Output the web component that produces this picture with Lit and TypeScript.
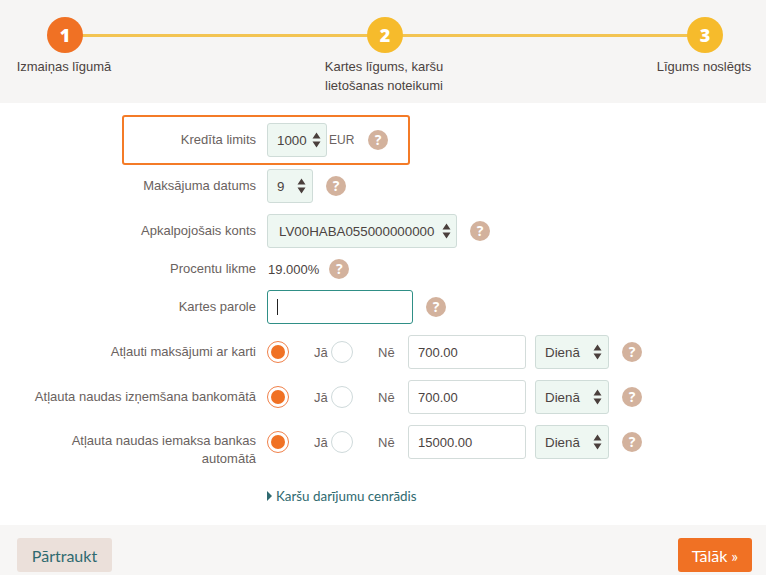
import { LitElement, html, css } from "lit";
import { customElement } from "lit/decorators.js";

const arrows = html`<svg class="arr" width="9" height="16" viewBox="0 0 9 16"><path d="M4.5 0.5 8.5 6.5H.5Z M4.5 15.5 .5 9.5H8.5Z" fill="#4a3f3c"/></svg>`;

@customElement("app-root")
export class AppRoot extends LitElement {
  static styles = css`
    :host { display: block; width: 766px; height: 575px; background: #fff; overflow: hidden;
      font-family: "Liberation Sans", Arial, sans-serif; font-size: 13px; color: #5c5452; }
    * { box-sizing: border-box; }
    .head { position: relative; height: 103px; background: #f6f5f4; padding: 17px 0 0 4px; display: flex; justify-content: space-between; }
    .line { position: absolute; left: 65px; width: 640px; top: 34px; height: 3px; background: #f3c452; }
    .step { position: relative; width: 122px; display: flex; flex-direction: column; align-items: center; text-align: center; font-size: 13px; line-height: 19px; color: #4b4341; }
    .txt { margin-right: 2px; }
    .dot { width: 36px; height: 36px; border-radius: 50%; background: #f6bb2c; color: #fff; font: 800 18px/36px "Open Sans", sans-serif; margin-bottom: 4px; }
    .dot.on { background: #f07124; }
    .main { padding-top: 12px; height: 422px; }
    .row { display: flex; align-items: center; height: 34px; margin-top: 11px; }
    .lab { width: 256px; margin-right: 11px; flex: none; text-align: right; line-height: 18px; color: #6a6260; }
    .hl { margin: 0 0 0 122px; width: 288px; height: 50px; border: 2px solid #f47b27; border-radius: 3px; }
    .hl .lab { width: 132px; }
    .r2 { margin-top: 4px; }
    .tall { height: 22px; margin-top: 10px; }
    .r5 { margin-top: 10px; }
    .sel { height: 34px; display: flex; align-items: center; justify-content: space-between; background: #eef7f2; border: 1px solid #cfdcd8; border-radius: 3px; color: #4b4341; flex: none; font-size: 13.33px; }
    .s1 { width: 60px; padding: 0 5px 0 9px; }
    .s2 { width: 46px; padding: 0 6px 0 9px; }
    .s3 { width: 190px; padding: 0 5px 0 11px; }
    .s4 { width: 74px; margin-left: 9px; padding: 0 6px 0 9px; }
    .arr { flex: none; }
    .unit { font-size: 12px; margin-left: 2px; width: 26px; color: #6a6260; }
    .q { width: 20px; height: 20px; flex: none; border-radius: 50%; background: #d3b29d; color: #fff; font: 700 14px/20px "Open Sans", sans-serif; text-align: center; }
    .q1, .q2, .q3, .q4 { margin-left: 13px; }
    .val { color: #4b4341; margin: 0 10px 0 1px; }
    .input { height: 34px; background: #fff; border: 1px solid #d3dcda; border-radius: 3px; padding-left: 9px; display: flex; align-items: center; color: #4b4341; flex: none; }
    .pw { width: 146px; border-color: #2f8f86; margin-right: 13px; }
    .caret { width: 1px; height: 16px; background: #222; }
    .amt { width: 118px; }
    .radio { width: 22px; height: 22px; border-radius: 50%; border: 1px solid #cfdadb; background: #fff; flex: none; }
    .radio.on { border-color: #f0814a; display: flex; align-items: center; justify-content: center; }
    .radio.on::after { content: ""; width: 14px; height: 14px; border-radius: 50%; background: #f07124; }
    .ja { margin-left: 25px; width: 17px; flex: none; color: #6a6260; }
    .ne { margin-left: 25px; width: 30px; flex: none; color: #6a6260; }
    .top { align-items: flex-start; }
    .top .lab { padding: 7px 0 0 60px; }
    .top .q { align-self: center; }
    .top .ctr { align-self: center; }
    .link { margin: 28px 0 0 267px; display: flex; align-items: center; gap: 4px; font: 13.4px/18px Lato, sans-serif; color: #2f6a70; }
    .tri { width: 0; height: 0; border-left: 5px solid #2f6a70; border-top: 5px solid transparent; border-bottom: 5px solid transparent; }
    .foot { height: 50px; background: #f7f6f5; padding: 13px 14px 3px 17px; display: flex; justify-content: space-between; }
    .btn { height: 34px; border-radius: 3px; display: flex; align-items: center; justify-content: center; font: 16px Lato, sans-serif; }
    .back { width: 95px; background: #ebe0da; color: #2f6a70; }
    .next { width: 74px; background: #f07124; color: #fff; }
  `;

  private radios() {
    return html`<span class="radio on ctr"></span><span class="ja ctr">Jā</span><span class="radio ctr"></span><span class="ne ctr">Nē</span>`;
  }

  private limitRow(label: string, amount: string, top = false) {
    return html`<div class="row ${top ? "top" : ""}">
      <div class="lab">${label}</div>
      ${this.radios()}
      <div class="input amt ctr">${amount}</div>
      <div class="sel s4 ctr">Dienā ${arrows}</div>
      <span class="q q4">?</span>
    </div>`;
  }

  render() {
    return html`
      <div class="head">
        <div class="line"></div>
        <div class="step"><div class="dot on">1</div><span class="txt">Izmaiņas līgumā</span></div>
        <div class="step"><div class="dot">2</div><span class="txt">Kartes līgums, karšu lietošanas noteikumi</span></div>
        <div class="step"><div class="dot">3</div><span class="txt">Līgums noslēgts</span></div>
      </div>
      <div class="main">
        <div class="row hl">
          <div class="lab">Kredīta limits</div>
          <div class="sel s1">1000 ${arrows}</div>
          <span class="unit">EUR</span>
          <span class="q q1">?</span>
        </div>
        <div class="row r2">
          <div class="lab">Maksājuma datums</div>
          <div class="sel s2">9 ${arrows}</div>
          <span class="q q2">?</span>
        </div>
        <div class="row">
          <div class="lab">Apkalpojošais konts</div>
          <div class="sel s3">LV00HABA055000000000 ${arrows}</div>
          <span class="q q3">?</span>
        </div>
        <div class="row tall">
          <div class="lab">Procentu likme</div>
          <span class="val">19.000%</span>
          <span class="q">?</span>
        </div>
        <div class="row r5">
          <div class="lab">Kartes parole</div>
          <div class="input pw"><span class="caret"></span></div>
          <span class="q">?</span>
        </div>
        ${this.limitRow("Atļauti maksājumi ar karti", "700.00")}
        ${this.limitRow("Atļauta naudas izņemšana bankomātā", "700.00")}
        ${this.limitRow("Atļauta naudas iemaksa bankas automātā", "15000.00", true)}
        <div class="link"><span class="tri"></span>Karšu darījumu cenrādis</div>
      </div>
      <div class="foot">
        <div class="btn back">Pārtraukt</div>
        <div class="btn next">Tālāk »</div>
      </div>
    `;
  }
}
